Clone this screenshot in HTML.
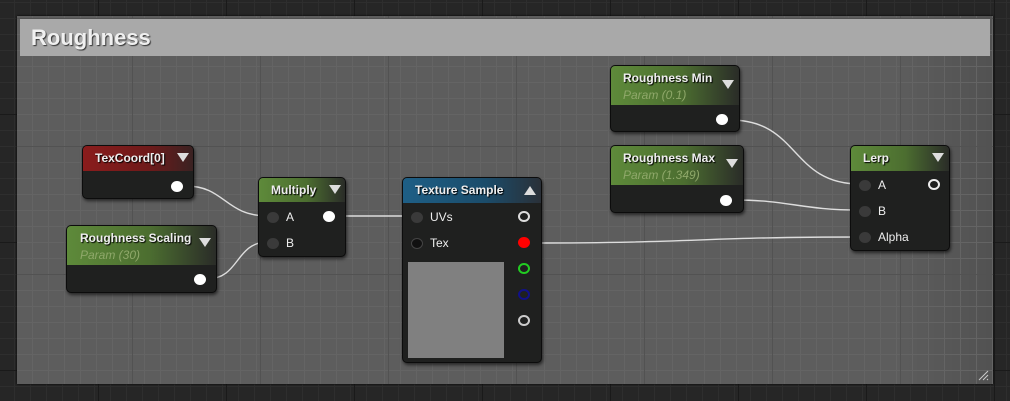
<!DOCTYPE html>
<html><head><style>
*{margin:0;padding:0;box-sizing:border-box}
body{width:1010px;height:401px;overflow:hidden;background:#262626;font-family:"Liberation Sans",sans-serif;position:relative;
background-image:linear-gradient(#1a1a1a 1px,transparent 1px),linear-gradient(90deg,#1a1a1a 1px,transparent 1px),linear-gradient(#2e2e2e 1px,transparent 1px),linear-gradient(90deg,#2e2e2e 1px,transparent 1px);
background-size:128px 128px,128px 128px,16px 16px,16px 16px;background-position:-30px -14px,-30px -14px,-2px 2px,-2px 2px}
.cm{position:absolute;left:17px;top:16px;width:976px;height:368px;background:#5d5d5d;box-shadow:0 0 2px #000;
background-image:linear-gradient(#525252 1px,transparent 1px),linear-gradient(90deg,#525252 1px,transparent 1px),linear-gradient(#646464 1px,transparent 1px),linear-gradient(90deg,#646464 1px,transparent 1px),linear-gradient(90deg,rgba(0,0,0,0) 90%,rgba(0,0,0,.12));
background-size:128px 128px,128px 128px,16px 16px,16px 16px,100% 100%;background-position:-13px 2px,-13px 2px,-1px 2px,-1px 2px,0 0}
.hd{position:absolute;left:3px;top:3px;width:970px;height:37px;background:#a9a9a9;color:#f0f0f0;font-weight:bold;font-size:22px;padding:6px 0 0 11px;text-shadow:1px 1px 1px #333}
.n{position:absolute;background:#1f201f;border:1px solid #0c0c0c;border-radius:5px;box-shadow:1px 2px 3px rgba(0,0,0,.6);color:#eee;font-size:12px}
.h{position:absolute;left:0;top:0;right:0;border-radius:4px 4px 0 0;padding:5px 0 0 13px;font-weight:bold;font-size:12px;text-shadow:1px 1px 1px #000}
.h i{display:block;font-style:italic;font-weight:normal;color:#8fa86a;text-shadow:none;margin-top:3px}
.g{background:linear-gradient(90deg,#5e8a3a 0%,#4c6e30 55%,#2a2c28 100%)}
.r{background:linear-gradient(90deg,#8a1c1c 0%,#6e1a1a 60%,#3a2222 100%)}
.b{background:linear-gradient(90deg,#1e5f86 0%,#1b4c6a 60%,#2a3038 100%)}
.tri{position:absolute;width:0;height:0;border-left:6px solid transparent;border-right:6px solid transparent;border-top:9px solid #ddd}
.up{border-top:none;border-bottom:9px solid #ddd}
.t{position:absolute;font-size:12px;color:#eee}
.pin{position:absolute;width:12px;height:11px;border-radius:50%}
</style></head><body>
<div class="cm"><div class="hd">Roughness</div>
<svg style="position:absolute;right:4px;bottom:3px" width="12" height="12"><path d="M11 2L2 11M11 6L6 11M11 10L10 11" stroke="#ccc" stroke-width="1"/></svg>
</div>
<svg style="position:absolute;left:0;top:0" width="1010" height="401" fill="none" stroke="#ddd" stroke-width="1.4">
<path d="M186 186 C225 186,225 216,268 216"/>
<path d="M207 279 C240 279,235 242,268 242"/>
<path d="M336 216 L412 216"/>
<path d="M530 243 C700 243,700 237,860 237"/>
<path d="M730 120 C800 120,790 184,860 184"/>
<path d="M734 200 C790 200,800 210,860 210"/>
</svg>
<div class="n" style="left:82px;top:145px;width:112px;height:54px"><div class="h r" style="height:25px;padding-left:12px">TexCoord[0]</div><div class="tri" style="left:94px;top:7px"></div>
<div class="pin" style="left:88px;top:35px;background:#fff"></div></div>
<div class="n" style="left:66px;top:225px;width:151px;height:68px"><div class="h g" style="height:39px">Roughness Scaling<i>Param (30)</i></div><div class="tri" style="left:132px;top:12px"></div>
<div class="pin" style="left:127px;top:48px;background:#fff"></div></div>
<div class="n" style="left:258px;top:177px;width:88px;height:80px"><div class="h g" style="height:24px;padding-left:12px">Multiply</div><div class="tri" style="left:70px;top:7px"></div>
<div class="pin" style="left:8px;top:34px;background:#3a3a3a"></div><div class="t" style="left:27px;top:32px">A</div>
<div class="pin" style="left:8px;top:60px;background:#3a3a3a"></div><div class="t" style="left:27px;top:58px">B</div>
<div class="pin" style="left:64px;top:33px;background:#fff"></div></div>
<div class="n" style="left:402px;top:177px;width:140px;height:186px"><div class="h b" style="height:25px;padding-left:12px">Texture Sample</div><div class="tri up" style="left:121px;top:8px"></div>
<div class="pin" style="left:8px;top:34px;background:#3a3a3a"></div><div class="t" style="left:27px;top:32px">UVs</div>
<div class="pin" style="left:8px;top:60px;background:#111;border:1px solid #444"></div><div class="t" style="left:27px;top:58px">Tex</div>
<div style="position:absolute;left:5px;top:84px;width:96px;height:96px;background:#808080"></div>
<div class="pin" style="left:115px;top:33px;border:2px solid #ddd"></div>
<div class="pin" style="left:115px;top:59px;background:#f00"></div>
<div class="pin" style="left:115px;top:85px;border:2px solid #2c2"></div>
<div class="pin" style="left:115px;top:111px;border:2px solid #118"></div>
<div class="pin" style="left:115px;top:137px;border:2px solid #ccc"></div></div>
<div class="n" style="left:610px;top:65px;width:130px;height:67px"><div class="h g" style="height:39px;padding-left:12px">Roughness Min<i>Param (0.1)</i></div><div class="tri" style="left:111px;top:14px"></div>
<div class="pin" style="left:105px;top:48px;background:#fff"></div></div>
<div class="n" style="left:610px;top:145px;width:134px;height:68px"><div class="h g" style="height:39px;padding-left:12px">Roughness Max<i>Param (1.349)</i></div><div class="tri" style="left:115px;top:13px"></div>
<div class="pin" style="left:109px;top:49px;background:#fff"></div></div>
<div class="n" style="left:850px;top:145px;width:100px;height:106px"><div class="h g" style="height:25px;padding-left:12px">Lerp</div><div class="tri" style="left:81px;top:7px"></div>
<div class="pin" style="left:8px;top:34px;background:#3a3a3a"></div><div class="t" style="left:27px;top:32px">A</div>
<div class="pin" style="left:8px;top:60px;background:#3a3a3a"></div><div class="t" style="left:27px;top:58px">B</div>
<div class="pin" style="left:8px;top:86px;background:#3a3a3a"></div><div class="t" style="left:27px;top:84px">Alpha</div>
<div class="pin" style="left:77px;top:33px;border:2px solid #eee"></div></div>
</body></html>
